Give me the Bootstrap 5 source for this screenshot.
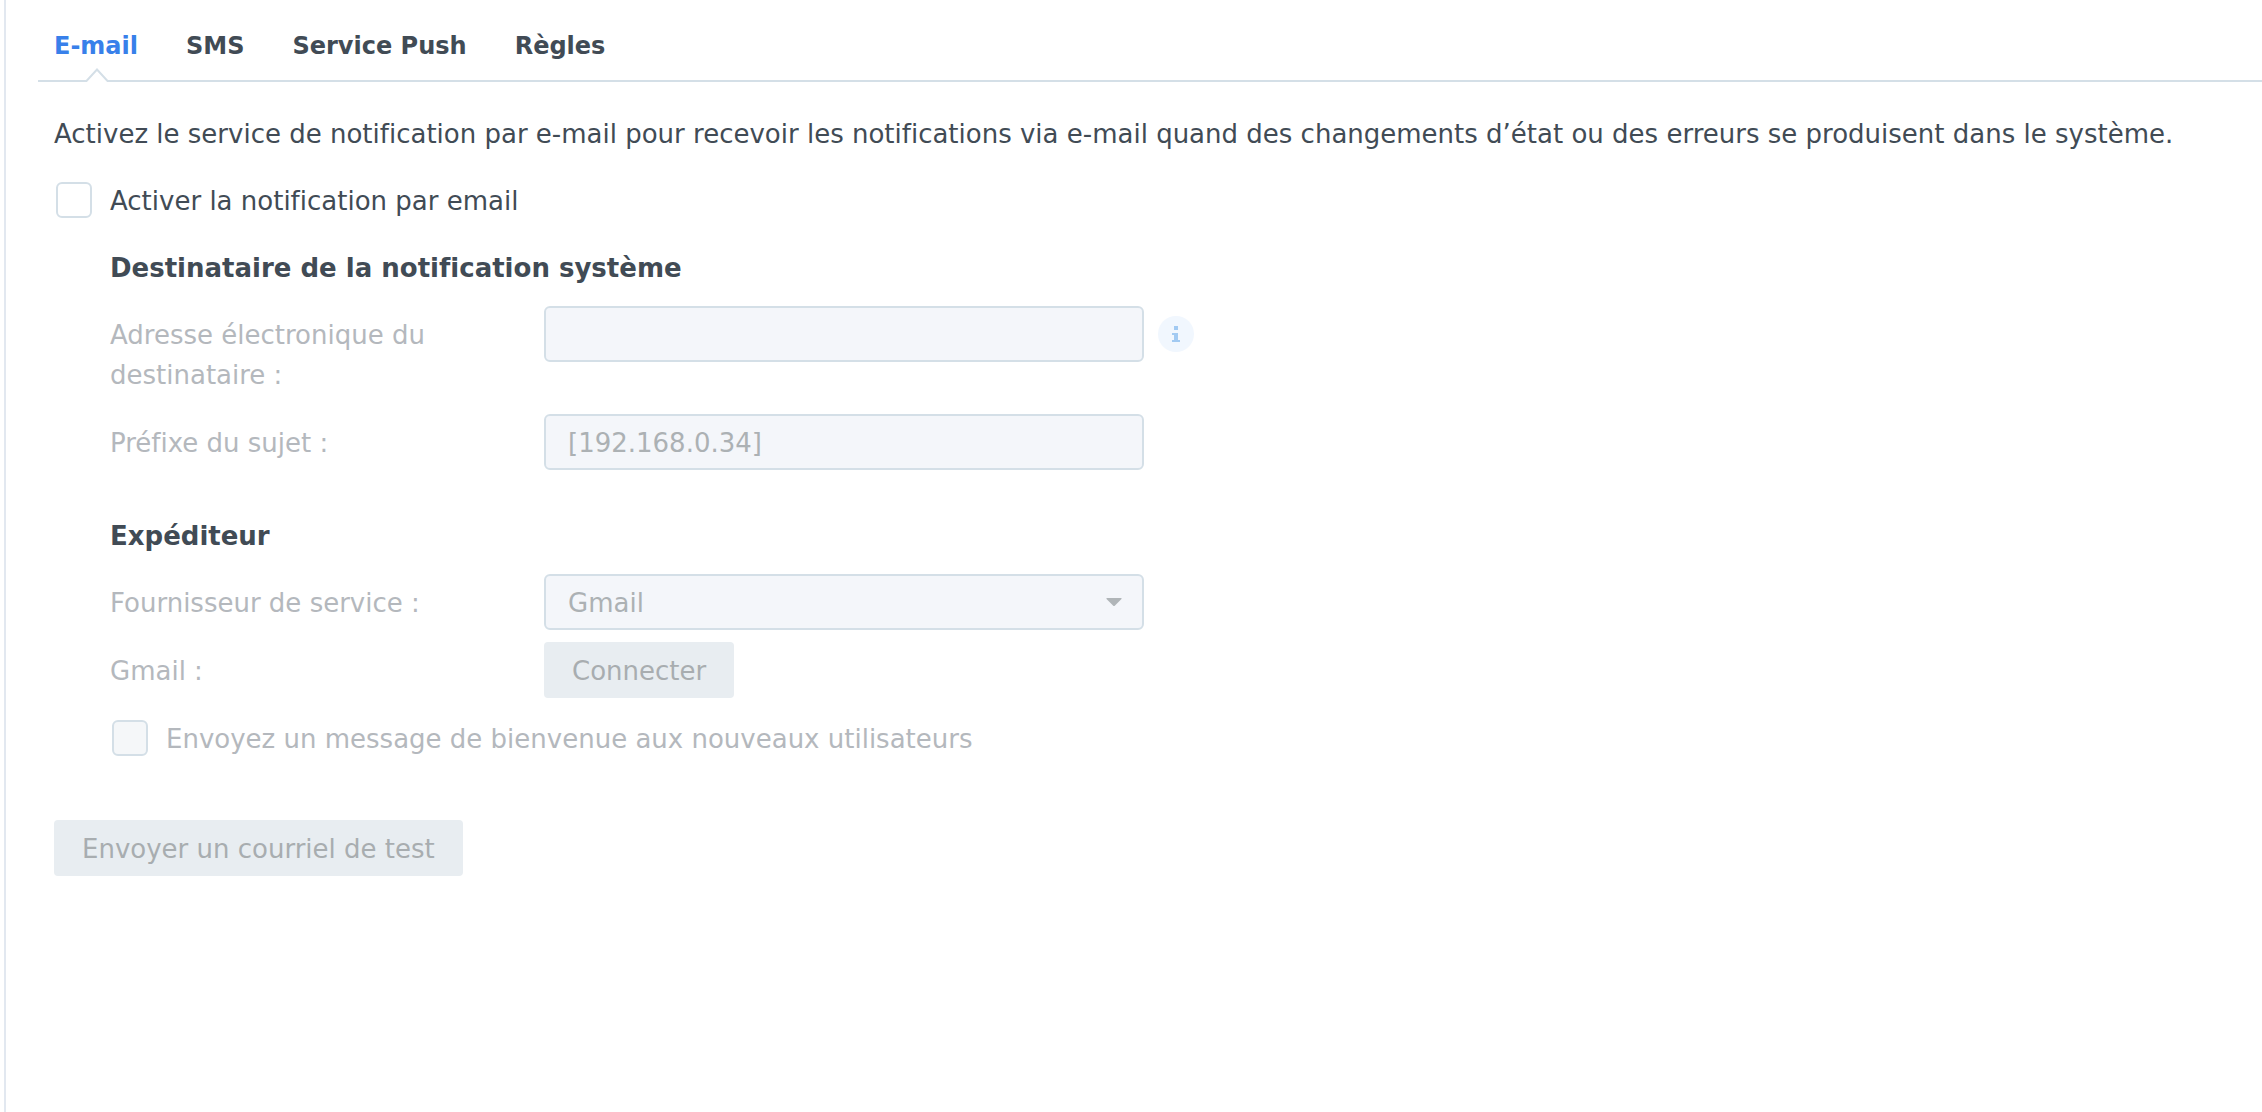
<!DOCTYPE html>
<html lang="fr">
<head>
<meta charset="utf-8">
<meta name="viewport" content="width=device-width, initial-scale=1">
<title>Notification</title>
<link href="https://cdn.jsdelivr.net/npm/bootstrap@5.3.0/dist/css/bootstrap.min.css" rel="stylesheet">
<style>
:root { --ink: #414b55; --accent: #3880ea; --edge: #d4dfe7; --muted: #b4b8bd; --field: #f4f6fa; }
body { font-family: Verdana, "DejaVu Sans", sans-serif; font-size: 26px; line-height: 40px; font-variant-ligatures: none; color: var(--ink); background: #fff; }
.panel { margin-left: 4px; border-left: 2px solid #e2e8f0; padding-left: 32px; }
.tabs { border-bottom: 2px solid var(--edge); padding: 26px 16px 14px; gap: 48px; }
.tabs .nav-link { position: relative; padding: 0; font-size: 24px; font-weight: 700; color: var(--ink); }
.tabs .nav-link.active { color: var(--accent); }
.tab-notch { position: absolute; left: 50%; bottom: -16px; margin-left: -11px; display: block; }
.content { padding: 32px 16px; }
.intro { margin-bottom: 18px; }
.form-stack { display: flex; flex-direction: column; gap: 12px; }
.line { display: flex; align-items: flex-start; flex-wrap: wrap; }
.nested { padding-left: 56px; }
.section-title { font-size: 26px; font-weight: 700; line-height: 40px; padding: 8px 0 6px; margin: 0; }
.section-title.later { margin-top: 26px; }
.field-label { width: 434px; padding: 9px 100px 7px 0; color: var(--muted); }
.field { width: 600px; max-width: 100%; height: 56px; font-size: 26px; line-height: 40px; padding: 7px 22px 5px; border: 2px solid var(--edge); border-radius: 6px; }
.field:disabled { background-color: var(--field); color: #acb1b4; opacity: 1; }
select.field { --bs-form-select-bg-img: url("data:image/svg+xml,%3Csvg xmlns='http://www.w3.org/2000/svg' viewBox='0 0 16 8'%3E%3Cpath fill='%23b0b5b8' d='M1 0h14q1 0 .5 1L9 7.500q-1 1-2 0L.5 1Q0 0 1 0z'/%3E%3C/svg%3E"); background-size: 16px 8px; background-position: right 20px center; }
.tick-line { display: flex; align-items: center; gap: 18px; min-height: 56px; padding-left: 2px; }
.tick-line .form-check-input { width: 36px; height: 36px; margin: 0; flex: none; border: 2px solid var(--edge); border-radius: 6px; }
.tick-line .form-check-input:disabled { background-color: #f5f7f9; opacity: 1; }
.tick-line .form-check-input:disabled ~ label { color: var(--muted); opacity: 1; }
.tick-line label { padding-top: 2px; }
.soft-btn { height: 56px; font-size: 26px; line-height: 40px; padding: 9px 28px 7px; border: 0; border-radius: 4px; }
.soft-btn:disabled { background: #e8edf1; color: #a8adb0; opacity: 1; border: 0; }
.test-btn { margin-top: 54px; }
.info-btn { width: 36px; height: 36px; margin: 10px 0 0 14px; display: block; }
</style>
<script src="https://cdn.jsdelivr.net/npm/bootstrap@5.3.0/dist/js/bootstrap.bundle.min.js"></script>
</head>
<body>
<main class="panel min-vh-100">
  <nav class="nav tabs" aria-label="Notification">
    <a class="nav-link active" aria-current="page" href="#email">E-mail
      <svg class="tab-notch" width="24" height="14" viewBox="0 0 24 14" aria-hidden="true"><path d="M1 14L12 1.500 23 14z" fill="#fff"/><path d="M0 13H1.500L12 1.500 22.500 13H24" fill="none" stroke="#d4dfe7" stroke-width="2"/></svg>
    </a>
    <a class="nav-link" href="#sms">SMS</a>
    <a class="nav-link" href="#push">Service Push</a>
    <a class="nav-link" href="#rules">Règles</a>
  </nav>
  <form class="content" id="email">
    <p class="intro">Activez le service de notification par e-mail pour recevoir les notifications via e-mail quand des changements d’état ou des erreurs se produisent dans le système.</p>
    <div class="form-stack">
      <div class="tick-line">
        <input class="form-check-input" type="checkbox" id="enable">
        <label for="enable">Activer la notification par email</label>
      </div>
      <div class="form-stack nested">
        <h2 class="section-title">Destinataire de la notification système</h2>
        <div class="line">
          <label class="field-label" for="recipient">Adresse électronique du destinataire :</label>
          <input class="form-control field" type="text" id="recipient" disabled>
          <svg class="info-btn" viewBox="0 0 36 36" role="img" aria-label="Information"><circle cx="18" cy="18" r="18" fill="#f1f7fe"/><path d="M16 10h4v4h-4zM14 17h6v7h2v2h-8v-2h2v-5h-2z" fill="#a2caf2"/></svg>
        </div>
        <div class="line">
          <label class="field-label" for="prefix">Préfixe du sujet :</label>
          <input class="form-control field" type="text" id="prefix" value="[192.168.0.34]" disabled>
        </div>
        <h2 class="section-title later">Expéditeur</h2>
        <div class="line">
          <label class="field-label" for="provider">Fournisseur de service :</label>
          <select class="form-select field" id="provider" disabled><option>Gmail</option></select>
        </div>
        <div class="line">
          <label class="field-label" for="connect">Gmail :</label>
          <button class="btn soft-btn" type="button" id="connect" disabled>Connecter</button>
        </div>
        <div class="tick-line">
          <input class="form-check-input" type="checkbox" id="welcome" disabled>
          <label for="welcome">Envoyez un message de bienvenue aux nouveaux utilisateurs</label>
        </div>
      </div>
    </div>
    <button class="btn soft-btn test-btn" type="button" disabled>Envoyer un courriel de test</button>
  </form>
</main>
</body>
</html>
